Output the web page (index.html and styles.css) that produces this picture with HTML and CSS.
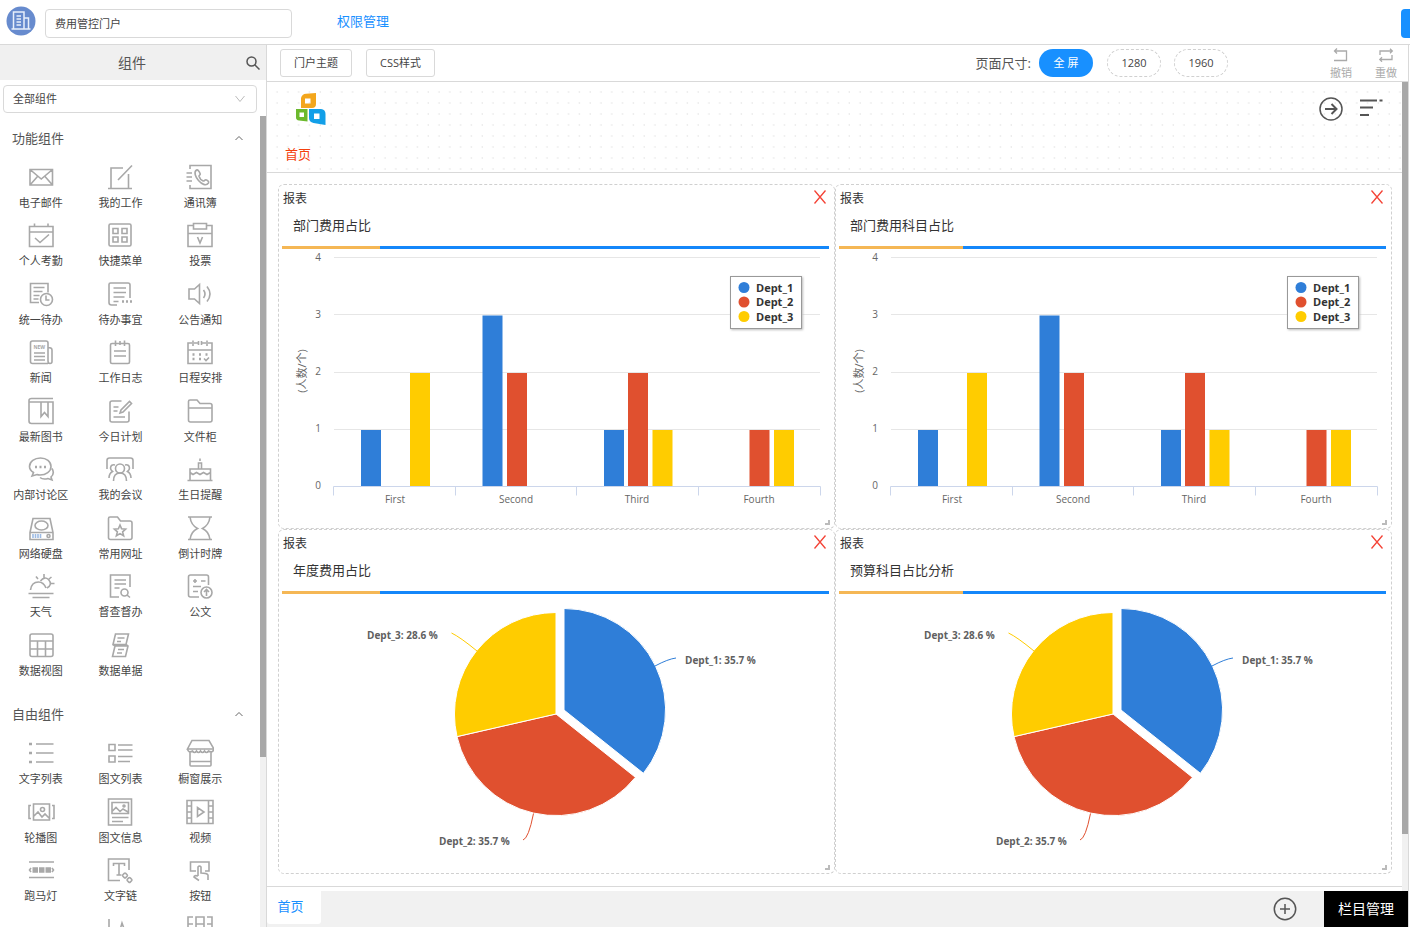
FILE: index.html
```html
<!DOCTYPE html>
<html lang="zh-CN">
<head>
<meta charset="utf-8">
<title>费用管控门户</title>
<link rel="stylesheet" href="styles.css">
</head>
<body>
<header class="topbar">
  <svg class="topbar-logo" viewBox="0 0 30 30"><circle cx="15" cy="15" r="14.5" fill="#678bce"/><path d="M5.500 23h19M7.500 23V6h10.500v17M18 12h4.500v11M10.500 10h4.500M10.500 13h4.500M10.500 16h4.500M10.500 19h4.500" fill="none" stroke="#e8effb" stroke-width="1.500"/></svg>
  <input class="portal-name" type="text" value="费用管控门户" aria-label="门户名称">
  <a class="auth-link" href="#">权限管理</a>
  <button class="save-button" type="button" aria-label="保存"></button>
</header>
<div class="workspace">
  <aside class="sidebar">
    <div class="sidebar-title">
      <h2>组件</h2>
      <button class="icon-button" type="button" aria-label="搜索"><svg viewBox="0 0 14 14"><circle cx="5.500" cy="5.500" r="4.500"/><path d="M8.700 8.700L13.500 13.500"/></svg></button>
    </div>
    <div class="filter">
      <select class="filter-select" aria-label="组件筛选"><option>全部组件</option></select>
      <svg class="filter-arrow" viewBox="0 0 10 8"><path d="M.5 1L5 6.500 9.500 1"/></svg>
    </div>
    <div class="sidebar-scroll">
      <div class="sidebar-list">
        <button class="section-toggle" type="button">功能组件<svg viewBox="0 0 8 6"><path d="M.5 5L4 1.500 7.500 5"/></svg></button>
        <ul class="parts parts-function">
          <li class="part"><svg viewBox="0 0 28 28"><path d="M3 6.500h22.500v15.500H3zM3 6.500L14.250 16 25.500 6.500M3 22l7.500-8.500M25.500 22L18 13.500"/></svg>电子邮件</li>
          <li class="part"><svg viewBox="0 0 28 28"><path d="M2 25.500h24M17 5H5v20M22.500 11v14M12 17L26 2.500"/></svg>我的工作</li>
          <li class="part"><svg viewBox="0 0 28 28"><path d="M4 6V2.500h21v23H4V22M.5 10H6M.5 14H6M.5 18H6M10.500 7c-3 2-1 7 2 10.500s7.500 6 10 2.500c.8-1.500-1-2.500-2.500-3.200-1-.5-1.800 1.700-2.800 1.200-1.700-.8-3.700-3-4.200-4.800-.3-1.200 1.700-1.200 1.200-2.500-.7-1.700-2.200-4.500-3.700-3.700z"/></svg>通讯簿</li>
          <li class="part"><svg viewBox="0 0 28 28"><path d="M2.500 5.500h23.500v20H2.500zM2.500 11H26M7.500 2.500v3M21 2.500v3M8 17l5 4.500 9-8"/></svg>个人考勤</li>
          <li class="part"><svg viewBox="0 0 28 28"><rect x="3" y="3" width="22" height="22" rx="1.500"/><path d="M7 7.500h5v5H7zM16 7.500h5v5h-5zM7 16h5v5H7zM16 16h5v5h-5z"/></svg>快捷菜单</li>
          <li class="part"><svg viewBox="0 0 28 28"><path d="M7.500 4.500H2v21h24v-21h-5.500M7.500 2.500h13V8h-13zM2 12.500h24M11.500 16l2.500 6 2.500-6"/></svg>投票</li>
          <li class="part"><svg viewBox="0 0 28 28"><path d="M12 22.500H3.500v-19h17.500v9M6.500 7.500h11M6.500 11.500h9M6.500 15.500h6M6.500 19h5"/><circle cx="19.500" cy="19.500" r="6"/><path d="M19 15.500V20h3.500"/></svg>统一待办</li>
          <li class="part"><svg viewBox="0 0 28 28"><path d="M11 25H5.500Q3 25 3 22.500v-18Q3 3 4.500 3H22q2 0 2 2v13M7.500 8h12.500M7.500 12.500h12.500M7.500 17h11M7.500 21.500h5"/><path d="M16 21.500h2M20 21.500h2M24 21.500h2" stroke-width="2.500"/></svg>待办事宜</li>
          <li class="part"><svg viewBox="0 0 28 28"><path d="M3 9v10h5.500l5 4.500v-19l-5 4.500zM17.500 10q3 4 0 8M21 6.500q6 7.500 0 15"/></svg>公告通知</li>
          <li class="part"><svg viewBox="0 0 28 28"><path d="M21 25.500H5.500q-2 0-2-2V5q0-2 2-2H19q2 0 2 2v18q0 2.500 2 2.500t2-2V12q0-2.500-4-2.500M7 15h11M7 18.500h11M7 22h11"/><text class="part-tag" x="6.500" y="11">NEW</text></svg>新闻</li>
          <li class="part"><svg viewBox="0 0 28 28"><rect x="4.500" y="5.500" width="19" height="20" rx="1.500"/><path d="M9.500 2.500V8M18.500 2.500V8M14 3v4M8 13h12M8 18h12"/></svg>工作日志</li>
          <li class="part"><svg viewBox="0 0 28 28"><path d="M6 5H2v20.500h24V5h-4M8 5h4.500M15.500 5h4.500M2 12h24M7 2.500V8M21 2.500V8M12.500 3v4M15.500 3v4"/><path d="M6.500 16.500h2M13 16.500h2M19.500 16.500h2M6.500 21h2M13 21h2" stroke-width="2.500"/><path d="M18 20.500l2 2 3-3"/></svg>日程安排</li>
          <li class="part"><svg viewBox="0 0 28 28"><path d="M26 1.500H4.500Q2 1.500 2 3.500v20.500q0 2.500 2.500 2.500H26V5H2M14 5v14.500l3.500-4 3.500 4V5"/></svg>最新图书</li>
          <li class="part"><svg viewBox="0 0 28 28"><path d="M15.500 4H6Q4 4 4 6v17q0 2 2 2h15q2 0 2-2v-8.500M7.500 10h5M7.500 14h4M7.500 20H19"/><path d="M14 16l1-3L23.500 4.500l2 2L17 15z"/></svg>今日计划</li>
          <li class="part"><svg viewBox="0 0 28 28"><path d="M2.500 23.500V4.500q0-1.500 1.500-1.500h7l3 3.500h10q2 0 2 2V23q0 2-2 2H4.500q-2 0-2-2zM2.500 11H26"/></svg>文件柜</li>
          <li class="part"><svg viewBox="0 0 28 28"><path d="M5 21l1.500-3.500Q2.500 15 2.500 11.500C2.500 6.500 7.500 3 13.500 3S24 6.500 24 11.500 19 20 13 20q-2 0-3-.5zM25 13.500q3 5-1 8.500l1 3-4-1.500q-5 1.500-8-1"/><path d="M8 12h2M12.500 12h2M17 12h2" stroke-width="2.500"/></svg>内部讨论区</li>
          <li class="part"><svg viewBox="0 0 28 28"><path d="M1 14V5.500Q1 3 3.500 3h21Q27 3 27 5.500V14"/><circle cx="14" cy="13.500" r="4.500"/><path d="M7.500 26q0-8 6.500-8t6.500 8M9 10q-4-1-4.500 3 0 2 2 3.500Q3 18.500 3 23M19 10q4-1 4.500 3 0 2-2 3.500 3.500 2 3.500 6.500"/></svg>我的会议</li>
          <li class="part"><svg viewBox="0 0 28 28"><path d="M1.500 25.500h25M4 25V14h20.500v11M4 17.500l3 2 3.500-2 3.500 2 3.500-2 3.500 2 3.500-2M12.500 14V8h3v6M14 3.500V6"/></svg>生日提醒</li>
          <li class="part"><svg viewBox="0 0 28 28"><path d="M3 18.500L6 4.500h17l3 14v7H3zM3 18.500h23"/><ellipse cx="14.500" cy="11.500" rx="6.500" ry="4.500"/><path d="M6 20v4M8.500 20v4M11 20v4M13.500 20v4" stroke="#9dbbe4"/><circle cx="21.500" cy="22" r="1.500"/></svg>网络硬盘</li>
          <li class="part"><svg viewBox="0 0 28 28"><path d="M2.500 24V4.500q0-1.500 1.500-1.500h7.500l3 4H24q2 0 2 2v14.500q0 2-2 2H4.500q-2 0-2-2zM14 11l1.600 3.800 4 .3-3 2.700 1 4-3.600-2.200-3.600 2.200 1-4-3-2.700 4-.3z"/></svg>常用网址</li>
          <li class="part"><svg viewBox="0 0 28 28"><path d="M2 3h24M2 25.500h24M4 3q1 8 7.500 11.500-6.500 3-7.500 11M24 3q-1 8-7.500 11.500 6.500 3 7.500 11"/></svg>倒计时牌</li>
          <li class="part"><svg viewBox="0 0 28 28"><path d="M1.500 21.500h25M5.500 25.500h17M3.500 18q1-8 8-8 5 0 7.500 6M13.500 9q4-5 8-1.500 4.500 5-1.500 8.500M9 4.500l2 2.500M17 2v4M24.500 5l-2.500 2M24 11.500h3.500"/></svg>天气</li>
          <li class="part"><svg viewBox="0 0 28 28"><path d="M13 25H4.500V3H24v12M8.500 8H20M8.500 12H20M8.500 16h5"/><circle cx="18.500" cy="20.500" r="3.500"/><path d="M21 23l3 2.500"/></svg>督查督办</li>
          <li class="part"><svg viewBox="0 0 28 28"><path d="M13 25H4.500q-2 0-2-2V5q0-2 2-2h16q2 0 2 2v8M15 9h4.500M7 14.500h8M7 19.500h5M7 9h4M9 7v4"/><circle cx="20.500" cy="20.500" r="5.500"/><path d="M20.500 24v-6M18 20l2.500-2.500L23 20"/></svg>公文</li>
          <li class="part"><svg viewBox="0 0 28 28"><rect x="3" y="3" width="23" height="22.500" rx="2"/><path d="M3 10h23M3 18h23M10.500 10v15M18.500 10v15"/></svg>数据视图</li>
          <li class="part"><svg viewBox="0 0 28 28"><path d="M9.500 3h13l-2.500 10.500H7zM7 13.500l2 1.500L6.500 25.500H19.500L22 15l-2-1.500M9 15h13M11.500 7h7M11 10.500h4M12 18.500h6M11 22h5"/></svg>数据单据</li>
        </ul>
        <button class="section-toggle" type="button">自由组件<svg viewBox="0 0 8 6"><path d="M.5 5L4 1.500 7.500 5"/></svg></button>
        <ul class="parts parts-free">
          <li class="part"><svg viewBox="0 0 28 28"><path d="M9 5h17.500M9 14h17.500M9 23h17.500"/><path d="M2 5h3M2 14h3M2 23h3" stroke-width="2.500"/></svg>文字列表</li>
          <li class="part"><svg viewBox="0 0 28 28"><path d="M3 5.500h6v6H3zM3 17h6v6H3zM12 6h14.500M12 11h14.500M12 17.500h14.500M12 22.500h12"/></svg>图文列表</li>
          <li class="part"><svg viewBox="0 0 28 28"><path d="M6 1.500h17l5 8.500H1.500zM1.500 10q1 4.500 5 2 2 3 4 0 2 3 4 0 2 3 4 0 2 3 4 0 4 2.500 5.500-2M4 13.500V26q0 1 1 1h19q1 0 1-1V13.500M4 22.500h21"/></svg>橱窗展示</li>
          <li class="part"><svg viewBox="0 0 28 28"><path d="M6.500 6h16v16h-16zM4 7.500H2v13h2M25 7.500h2v13h-2M7 18l4-4 4 5 3-3 4 4"/><circle cx="15.500" cy="11.500" r="2"/></svg>轮播图</li>
          <li class="part"><svg viewBox="0 0 28 28"><path d="M2.500 1h23v26h-23zM6 4.500h16.500v11H6zM6 13.500l4-4 4 4 3-2.500 5 3M6 19.500h16.500M6 23.500h11"/><circle cx="18" cy="8" r="1"/></svg>图文信息</li>
          <li class="part"><svg viewBox="0 0 28 28"><path d="M1 2.500h26v23H1zM5.500 2.500v23M22.500 2.500v23M1 8h4.500M1 14h4.500M1 20h4.500M22.500 8H27M22.500 14H27M22.500 20H27M11.500 9.500v9l6.500-4.500z"/></svg>视频</li>
          <li class="part"><svg viewBox="0 0 28 28"><path d="M2 6h25M2 21.500h25M4 12l-1.500 2L4 16M25 12l1.500 2L25 16"/><path d="M5.500 14h5.500M12 14h5.500M18.500 14H24" stroke-width="5.500"/></svg>跑马灯</li>
          <li class="part"><svg viewBox="0 0 28 28"><path d="M14 24.500H2.500V3H23v11M7.500 10V7.500h11V10M13 7.500V19M10.500 19h5"/><rect x="17" y="17.500" width="4" height="4" rx="1" transform="rotate(45 19 19.500)"/><rect x="21.500" y="22" width="4" height="4" rx="1" transform="rotate(45 23.500 24)"/></svg>文字链</li>
          <li class="part"><svg viewBox="0 0 28 28"><path d="M10 15H4.500V6H23v9h-4M12 20v-9q1.500-2 3 0v6q6 0 7 2v5M12 20q-4-1-4 1l5 3.500"/></svg>按钮</li>
          <li class="part" aria-hidden="true"></li>
          <li class="part"><svg viewBox="0 0 28 28"><path d="M3 4v20h23M12 22l4-14 5 14"/></svg></li>
          <li class="part"><svg viewBox="0 0 28 28"><path d="M7 2H2v20h5M21 2h5v20h-5M10 2h8v20h-8zM2 9h5M10 9h8M21 9h5"/></svg></li>
        </ul>
      </div>
      <div class="scrollbar"><div class="thumb thumb-side"></div></div>
    </div>
  </aside>
  <main class="editor">
    <div class="toolbar">
      <button class="tool-button" type="button">门户主题</button>
      <button class="tool-button" type="button">CSS样式</button>
      <span class="size-label">页面尺寸:</span>
      <button class="size-pill size-active" type="button">全 屏</button>
      <button class="size-pill" type="button">1280</button>
      <button class="size-pill" type="button">1960</button>
      <div class="history">
        <button class="history-button" type="button"><svg viewBox="0 0 16 14"><path d="M4 .5L1.500 3 4 5.500M2 3h11.500v9.500H1"/></svg>撤销</button>
        <button class="history-button" type="button"><svg viewBox="0 0 16 14"><path d="M2 7V3h11.500M12 .8L14.300 3 12 5.200M14 7v4.500H2.500M4 9.300L1.800 11.500 4 13.700"/></svg>重做</button>
      </div>
    </div>
    <div class="canvas">
      <div class="page">
        <div class="page-head">
          <div class="page-head-row">
            <svg class="brand" viewBox="0 0 30 32"><path fill="#f3a61c" fill-rule="evenodd" d="M5 5Q6 1 10 .8L20 0v11q0 4-4 4H5zM9 5.500v5h5.500V5.500z"/><path fill="#6cb92d" fill-rule="evenodd" d="M0 16h11.500v12.500L3 27.500q-3-.5-3-3zM3.500 19.500V24H8v-4.500z"/><path fill="#129fe8" fill-rule="evenodd" d="M13 16h12q4.500.5 4.500 5v11l-12-2q-4.500-1-4.500-5zM18 20.500V26h5.500v-5.500z"/></svg>
            <div class="head-actions">
              <button class="icon-button" type="button" aria-label="进入"><svg viewBox="0 0 24 24"><circle cx="12" cy="12" r="11"/><path d="M6 12h11M12.500 7l5 5-5 5" stroke-width="2"/></svg></button>
              <button class="icon-button" type="button" aria-label="菜单"><svg viewBox="0 0 24 24"><path d="M1 3.500h17M1 10.500h13M1 18h9M20.500 3.500h3" stroke-width="2.200"/></svg></button>
            </div>
          </div>
          <a class="page-nav" href="#">首页</a>
        </div>
        <div class="cards">
          <section class="card">
            <div class="card-top"><span>报表</span><button class="close" type="button" aria-label="删除"><svg viewBox="0 0 12 14"><path d="M.5.5l11 13M11.500.5l-11 13"/></svg></button></div>
            <div class="card-title"><h3>部门费用占比</h3></div>
            <svg class="chart" viewBox="0 0 547 275">
              <path class="grid-line" d="M52 8.500h486M52 65.500h486M52 123.500h486M52 180.500h486"/>
              <path class="axis-line" d="M51.500 246.500v-9h487v9M173.500 237v9.500M294.500 237v9.500M416.500 237v9.500"/>
              <path class="dept1" d="M79 181h20v56H79zM200.500 66.500h20V237h-20zM322 181h20v56h-20z"/>
              <path class="dept2" d="M225 124h20v113h-20zM346 124h20v113h-20zM467.500 181h20v56h-20z"/>
              <path class="dept3" d="M128 124h20v113h-20zM370.500 181h20v56h-20zM492 181h20v56h-20z"/>
              <g class="axis-text"><text x="36" y="12">4</text><text x="36" y="69">3</text><text x="36" y="126">2</text><text x="36" y="183">1</text><text x="36" y="240">0</text><text x="113" y="254">First</text><text x="234" y="254">Second</text><text x="355" y="254">Third</text><text x="477" y="254">Fourth</text><text class="axis-title" transform="translate(24 122) rotate(-90)">(人数/个)</text></g>
              <rect class="legend-box" x="448.500" y="27.500" width="71" height="52"/>
              <circle class="dept1" cx="462" cy="38.500" r="5.500"/><circle class="dept2" cx="462" cy="53" r="5.500"/><circle class="dept3" cx="462" cy="67.500" r="5.500"/>
              <g class="legend-text"><text x="474" y="43">Dept_1</text><text x="474" y="57">Dept_2</text><text x="474" y="72">Dept_3</text></g>
            </svg>
            <span class="resize"></span>
          </section>
          <section class="card">
            <div class="card-top"><span>报表</span><button class="close" type="button" aria-label="删除"><svg viewBox="0 0 12 14"><path d="M.5.5l11 13M11.500.5l-11 13"/></svg></button></div>
            <div class="card-title"><h3>部门费用科目占比</h3></div>
            <svg class="chart" viewBox="0 0 547 275">
              <path class="grid-line" d="M52 8.500h486M52 65.500h486M52 123.500h486M52 180.500h486"/>
              <path class="axis-line" d="M51.500 246.500v-9h487v9M173.500 237v9.500M294.500 237v9.500M416.500 237v9.500"/>
              <path class="dept1" d="M79 181h20v56H79zM200.500 66.500h20V237h-20zM322 181h20v56h-20z"/>
              <path class="dept2" d="M225 124h20v113h-20zM346 124h20v113h-20zM467.500 181h20v56h-20z"/>
              <path class="dept3" d="M128 124h20v113h-20zM370.500 181h20v56h-20zM492 181h20v56h-20z"/>
              <g class="axis-text"><text x="36" y="12">4</text><text x="36" y="69">3</text><text x="36" y="126">2</text><text x="36" y="183">1</text><text x="36" y="240">0</text><text x="113" y="254">First</text><text x="234" y="254">Second</text><text x="355" y="254">Third</text><text x="477" y="254">Fourth</text><text class="axis-title" transform="translate(24 122) rotate(-90)">(人数/个)</text></g>
              <rect class="legend-box" x="448.500" y="27.500" width="71" height="52"/>
              <circle class="dept1" cx="462" cy="38.500" r="5.500"/><circle class="dept2" cx="462" cy="53" r="5.500"/><circle class="dept3" cx="462" cy="67.500" r="5.500"/>
              <g class="legend-text"><text x="474" y="43">Dept_1</text><text x="474" y="57">Dept_2</text><text x="474" y="72">Dept_3</text></g>
            </svg>
            <span class="resize"></span>
          </section>
          <section class="card">
            <div class="card-top"><span>报表</span><button class="close" type="button" aria-label="删除"><svg viewBox="0 0 12 14"><path d="M.5.5l11 13M11.500.5l-11 13"/></svg></button></div>
            <div class="card-title"><h3>年度费用占比</h3></div>
            <svg class="chart" viewBox="0 0 547 275">
              <g class="slices"><path class="dept1" d="M282 116V14.500A101.500 101.500 0 0 1 361.400 179.300z"/><path class="dept2" d="M274 120L353.400 183.300A101.500 101.500 0 0 1 175 142.600z"/><path class="dept3" d="M274 120L175 142.600A101.500 101.500 0 0 1 274 18.500z"/></g>
              <g class="leaders"><path stroke="#2f7ed8" d="M373 72q13-7 21-8"/><path stroke="#e0502f" d="M251.500 219.500q-5 25-10.500 26.500"/><path stroke="#ffcc00" d="M195 57q-17-14-25.500-18"/></g>
              <g class="pie-text"><text x="403" y="70">Dept_1: 35.7 %</text><text x="157" y="251">Dept_2: 35.7 %</text><text x="85" y="45">Dept_3: 28.6 %</text></g>
            </svg>
            <span class="resize"></span>
          </section>
          <section class="card">
            <div class="card-top"><span>报表</span><button class="close" type="button" aria-label="删除"><svg viewBox="0 0 12 14"><path d="M.5.5l11 13M11.500.5l-11 13"/></svg></button></div>
            <div class="card-title"><h3>预算科目占比分析</h3></div>
            <svg class="chart" viewBox="0 0 547 275">
              <g class="slices"><path class="dept1" d="M282 116V14.500A101.500 101.500 0 0 1 361.400 179.300z"/><path class="dept2" d="M274 120L353.400 183.300A101.500 101.500 0 0 1 175 142.600z"/><path class="dept3" d="M274 120L175 142.600A101.500 101.500 0 0 1 274 18.500z"/></g>
              <g class="leaders"><path stroke="#2f7ed8" d="M373 72q13-7 21-8"/><path stroke="#e0502f" d="M251.500 219.500q-5 25-10.500 26.500"/><path stroke="#ffcc00" d="M195 57q-17-14-25.500-18"/></g>
              <g class="pie-text"><text x="403" y="70">Dept_1: 35.7 %</text><text x="157" y="251">Dept_2: 35.7 %</text><text x="85" y="45">Dept_3: 28.6 %</text></g>
            </svg>
            <span class="resize"></span>
          </section>
        </div>
      </div>
      <div class="scrollbar"><div class="thumb thumb-canvas"></div></div>
    </div>
    <footer class="tabs">
      <button class="tab" type="button">首页</button>
      <button class="icon-button tab-add" type="button" aria-label="新增"><svg viewBox="0 0 24 24"><circle cx="12" cy="12" r="10.700"/><path d="M7 12h10M12 7v10"/></svg></button>
      <button class="manage" type="button">栏目管理</button>
    </footer>
  </main>
</div>
</body>
</html>
```
FILE: styles.css
```css
* { box-sizing: border-box; }
body {
  margin: 0;
  height: 100vh;
  display: flex;
  flex-direction: column;
  overflow: hidden;
  background: #fff;
  color: #444;
  font: 11px/18px "Open Sans", "Noto Sans CJK SC", sans-serif;
}
button, input, select { font: inherit; color: inherit; margin: 0; }
button { cursor: pointer; background: none; border: 0; padding: 0; }
a { text-decoration: none; }
h2, h3, ul { margin: 0; padding: 0; font-weight: 400; list-style: none; }
svg { display: block; flex: none; fill: none; }

.topbar { flex: none; height: 45px; display: flex; align-items: flex-start; border-bottom: 1px solid #d9d9d9; }
.topbar-logo { width: 30px; height: 30px; margin: 6px 9px 0 6px; }
.portal-name { width: 247px; height: 29px; margin: 9px 45px 0 0; padding: 0 9px 2px; border: 1px solid #d9d9d9; border-radius: 4px; background: #fff; }
.auth-link { margin-top: 12px; color: #1890ff; font-size: 13px; }
.save-button { width: 9px; height: 29px; margin: 9px 0 0 auto; background: #1890ff; border-radius: 4px 0 0 4px; }

.workspace { flex: 1; min-height: 0; display: flex; }
.sidebar { flex: none; width: 267px; display: flex; flex-direction: column; border-right: 1px solid #d9d9d9; }
.sidebar-title { flex: none; height: 35px; display: flex; align-items: center; background: #f0f0f0; padding-right: 6px; }
.sidebar-title h2 { flex: 1; padding-left: 18px; text-align: center; font-size: 14px; color: #555; }
.icon-button svg { stroke: #555; stroke-width: 1.5; }
.sidebar-title svg { width: 14px; height: 14px; }
.filter { flex: none; position: relative; padding: 5px 9px 3px 3px; }
.filter-select { display: block; width: 100%; height: 28px; padding: 0 9px; border: 1px solid #d9d9d9; border-radius: 4px; background: #fff; appearance: none; }
.filter-arrow { position: absolute; right: 21px; top: 15px; width: 10px; height: 8px; stroke: #bbb; pointer-events: none; }
.sidebar-scroll { flex: 1; min-height: 0; display: flex; }
.sidebar-list { flex: 1; overflow: hidden; }
.section-toggle { width: 100%; height: 44px; display: flex; align-items: center; justify-content: space-between; padding: 0 17px 0 12px; font-size: 13px; color: #555; }
.section-toggle svg { width: 8px; height: 6px; stroke: #666; }
.parts { display: grid; grid-template-columns: repeat(3, 1fr); grid-auto-rows: 1fr; padding: 0 20px 0 1px; }
.parts-function { height: 526px; margin-bottom: 6px; }
.parts-free { height: 234px; }
.part { display: flex; flex-direction: column; align-items: center; padding-top: 3px; gap: 3px; }
.part svg { width: 28px; height: 28px; stroke: #a8a8a8; stroke-width: 1.6; }
.part-tag { fill: #a6a6a6; stroke: none; font-size: 5px; font-weight: 700; }
.scrollbar { flex: none; width: 6px; background: #f1f1f1; }
.thumb { background: #a8a8a8; }
.thumb-side { height: 79%; }
.thumb-canvas { height: 93%; }

.editor { flex: 1; min-width: 0; display: flex; flex-direction: column; border-right: 1px solid #d9d9d9; margin-right: 1px; }
.toolbar { flex: none; height: 37px; display: flex; align-items: center; padding: 0 11px 0 13px; border-bottom: 1px solid #d9d9d9; }
.tool-button { height: 28px; padding: 0 13px; margin-right: 14px; border: 1px solid #d9d9d9; border-radius: 3px; }
.size-label { margin: 0 8px 0 auto; font-size: 13px; color: #555; }
.size-pill { width: 54px; height: 28px; margin-right: 13px; border: 1px dashed #d0d0d0; border-radius: 14px; }
.size-active { margin-right: 14px; border: 0; background: #1890ff; color: #fff; }
.history { display: flex; gap: 23px; margin-left: 89px; }
.history-button { display: flex; flex-direction: column; align-items: center; gap: 3px; padding-top: 3px; color: #aaa; line-height: 16px; }
.history-button svg { width: 16px; height: 14px; stroke: #aaa; stroke-width: 1.3; }

.canvas { flex: 1; min-height: 0; display: flex; }
.page { flex: 1; min-width: 0; overflow: hidden; margin-bottom: 4px; border-bottom: 1px solid #d9d9d9; }
.page-head {
  height: 91px;
  padding: 11px 19px 9px 18px;
  display: flex;
  flex-direction: column;
  justify-content: space-between;
  border-bottom: 1px solid #d9d9d9;
  background: radial-gradient(circle at 10px 10px, #d4d4d4 0, #fff 1px) 0 0 / calc(100% / 105) 11px;
}
.page-head-row { display: flex; justify-content: space-between; padding-left: 11px; }
.brand { width: 30px; height: 32px; }
.head-actions { display: flex; align-items: center; gap: 16px; }
.head-actions svg { width: 24px; height: 24px; }
.page-nav { font-size: 13px; color: #f4400d; }
.cards { display: grid; grid-template-columns: 1fr 1fr; padding: 11px 10px 11px 11px; }
.card { position: relative; min-width: 0; padding: 0 5px 4px 3px; border: 1px dashed #d0d0d0; border-radius: 6px; }
.card-top { height: 28px; display: flex; align-items: center; justify-content: space-between; padding: 0 3px 0 1px; font-size: 12px; color: #333; }
.close { padding-bottom: 4px; }
.close svg { width: 12px; height: 14px; stroke: #f44336; stroke-width: 1.3; }
.card-title { display: flex; border-bottom: 3px solid #1487fa; }
.card-title h3 { margin-bottom: -3px; padding: 0 9px 9px 11px; border-bottom: 3px solid #f5b755; font-size: 13px; line-height: 24px; color: #333; }
.chart { width: 100%; height: auto; font-size: 11px; }
.dept1 { fill: #2f7ed8; }
.dept2 { fill: #e0502f; }
.dept3 { fill: #ffcc00; }
.grid-line { stroke: #e6e6e6; }
.axis-line { stroke: #ccd6eb; }
.axis-text { fill: #666; text-anchor: middle; font-size: 10px; }
.axis-title { font-size: 11px; }
.legend-box { fill: #fff; stroke: #999; filter: drop-shadow(1px 1px 1px #bbb); }
.legend-text { fill: #333; font-weight: 700; }
.slices { stroke: #fff; }
.pie-text { fill: #606060; font-weight: 700; font-size: 10px; }
.resize { position: absolute; right: 4px; bottom: 3px; width: 5px; height: 5px; border: solid #bbb; border-width: 0 2px 2px 0; }

.tabs { flex: none; height: 36px; display: flex; align-items: stretch; background: #f1f1f1; }
.tab { width: 54px; margin-bottom: 3px; padding: 0 7px 3px 0; background: #fff; border-radius: 0 0 3px 3px; color: #1890ff; font-size: 13px; }
.tab-add { margin-left: auto; margin-right: 27px; }
.tab-add svg { width: 24px; height: 24px; }
.manage { width: 84px; background: #000; color: #fff; font-size: 14px; }
```
